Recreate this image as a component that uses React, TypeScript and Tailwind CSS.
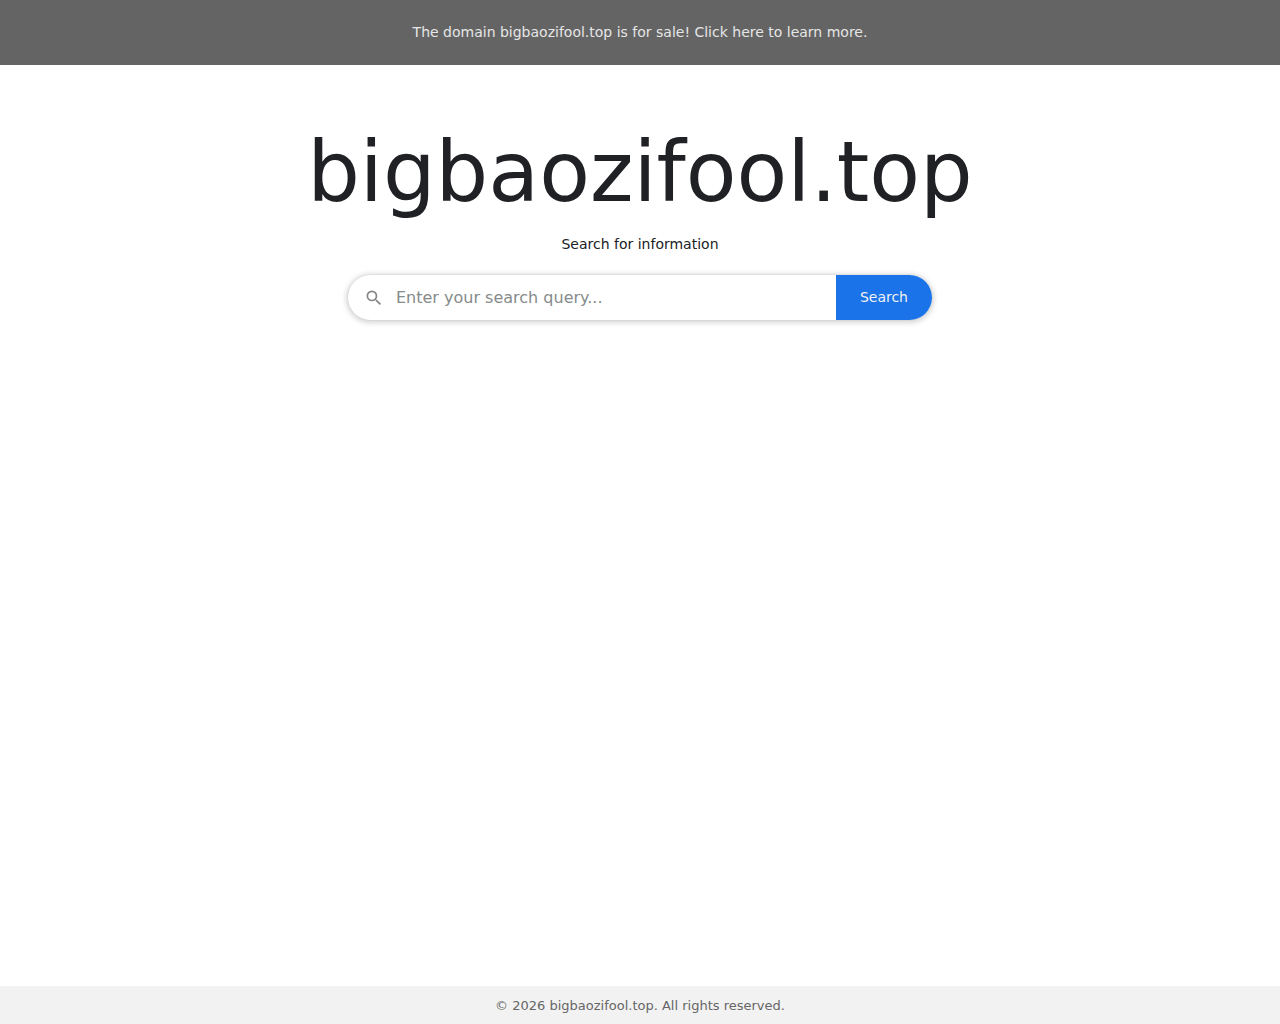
import React, { useState } from "react";

const DOMAIN = "bigbaozifool.top";

const SearchIcon = () => (
  <svg
    viewBox="0 0 24 24"
    className="w-5 h-5 shrink-0 fill-[#868686]"
    aria-hidden="true"
  >
    <path d="M15.5 14h-.79l-.28-.27A6.471 6.471 0 0 0 16 9.5 6.5 6.5 0 1 0 9.5 16c1.61 0 3.09-.59 4.23-1.57l.27.28v.79l5 4.99L20.49 19l-4.99-5zm-6 0C7.01 14 5 11.99 5 9.5S7.01 5 9.5 5 14 7.01 14 9.5 11.99 14 9.5 14z" />
  </svg>
);

const SearchForm = () => {
  const [query, setQuery] = useState("");
  const submitHandler = (e: React.FormEvent) => {
    e.preventDefault();
  };
  return (
    <form
      onSubmit={submitHandler}
      className="flex w-full max-w-[584px] h-[45px] mt-5 rounded-full overflow-hidden bg-white shadow-[0_0_0_1px_rgba(32,33,36,0.03),0_1px_5px_2px_rgba(32,33,36,0.18)]"
    >
      <label className="flex flex-1 items-center gap-3 pl-4 min-w-0">
        <SearchIcon />
        <input
          type="text"
          aria-label="Search query"
          value={query}
          onChange={(e) => setQuery(e.target.value)}
          className="flex-1 min-w-0 h-full text-base outline-none placeholder:text-[#868b8b]"
          placeholder="Enter your search query..."
        />
      </label>
      <button
        type="submit"
        className="px-6 pb-0.5 text-sm text-[#f1f1f1] bg-[#1a73e8] cursor-pointer"
      >
        Search
      </button>
    </form>
  );
};

const App = () => {
  return (
    <div className="flex flex-col min-h-screen bg-white text-[#202124] font-['DejaVu_Sans',sans-serif]">
      <a
        href="#"
        className="block py-[22px] text-sm leading-[21px] text-center text-[#e6e6e6] bg-[#646464]"
      >
        The domain {DOMAIN} is for sale! Click here to learn more.
      </a>
      <main className="flex flex-col flex-1 items-center px-4 pt-14">
        <h1 className="text-[83px] leading-[103px]">{DOMAIN}</h1>
        <p className="mt-[10px] text-sm leading-[21px]">
          Search for information
        </p>
        <SearchForm />
      </main>
      <footer className="pt-[10px] pb-2 text-[13px] leading-5 text-center text-[#666666] bg-[#f2f2f2]">
        © 2026 {DOMAIN}. All rights reserved.
      </footer>
    </div>
  );
};

export default App;
